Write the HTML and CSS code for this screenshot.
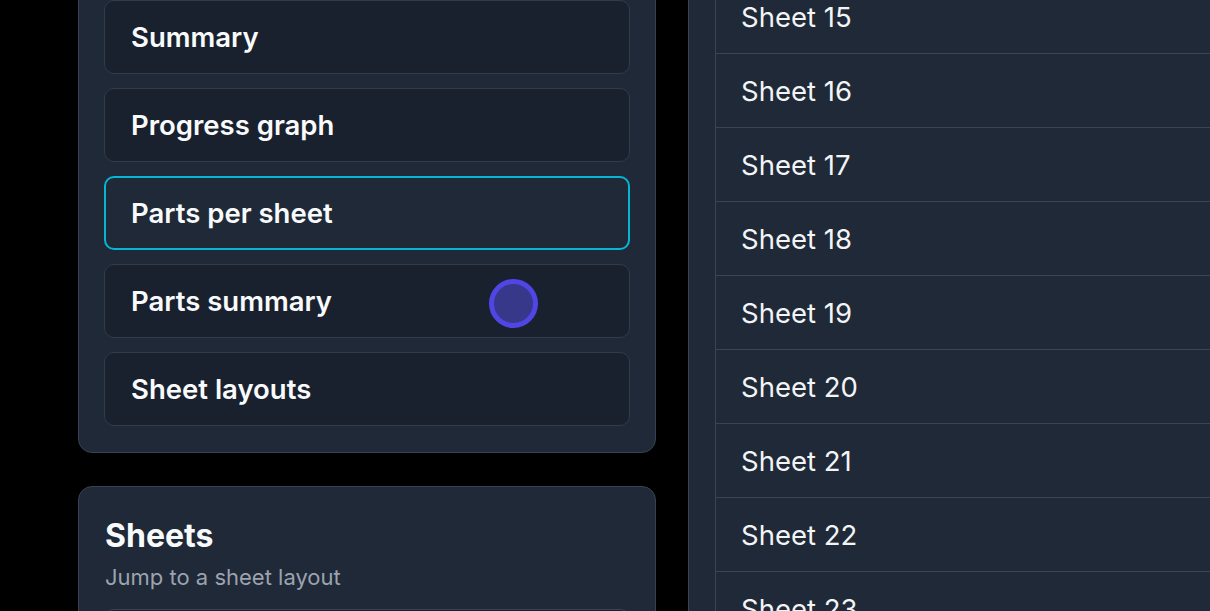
FILE: index.html
```html
<!DOCTYPE html>
<html lang="en">
<head>
<meta charset="utf-8">
<title>Reports</title>
<link rel="stylesheet" href="styles.css">
</head>
<body>
<div class="page">
  <div class="left">
    <section class="card nav-card">
      <div class="nav-item">Summary</div>
      <div class="nav-item">Progress graph</div>
      <div class="nav-item active">Parts per sheet</div>
      <div class="nav-item">Parts summary<span class="touch"></span></div>
      <div class="nav-item">Sheet layouts</div>
    </section>
    <section class="card sheets-card">
      <h2 class="sheets-title">Sheets</h2>
      <p class="sheets-sub">Jump to a sheet layout</p>
      <div class="sheets-box"></div>
    </section>
  </div>
  <div class="right">
    <ul class="sheet-list">
      <li class="sheet-row">Sheet 15</li>
      <li class="sheet-row">Sheet 16</li>
      <li class="sheet-row">Sheet 17</li>
      <li class="sheet-row">Sheet 18</li>
      <li class="sheet-row">Sheet 19</li>
      <li class="sheet-row">Sheet 20</li>
      <li class="sheet-row">Sheet 21</li>
      <li class="sheet-row">Sheet 22</li>
      <li class="sheet-row">Sheet 23</li>
    </ul>
  </div>
</div>
</body>
</html>
```

FILE: styles.css
```css
html, body {
  margin: 0;
  padding: 0;
  background: #000;
  height: 100%;
  overflow: hidden;
}
body {
  font-family: Inter, "Noto Sans", "Liberation Sans", sans-serif;
  color: #f9fafb;
}
.page {
  display: flex;
  align-items: flex-start;
  gap: 32px;
  padding-left: 78px;
}
.left {
  width: 578px;
  flex: none;
  display: flex;
  flex-direction: column;
  gap: 33px;
  margin-top: -27px;
}
.card {
  background: #1f2937;
  border: 1px solid #374151;
  border-radius: 14px;
  padding: 26px 25px;
  box-sizing: border-box;
}
.nav-card {
  display: flex;
  flex-direction: column;
  gap: 14px;
}
.nav-item {
  position: relative;
  height: 74px;
  box-sizing: border-box;
  border: 1px solid #323b4a;
  border-radius: 10px;
  background: #19212f;
  padding: 0 26px;
  display: flex;
  align-items: center;
  font-size: 27.5px;
  font-weight: 600;
  color: #f9fafb;
}
.nav-item.active {
  border: 2px solid #06b6d4;
  padding: 0 25px;
  background: #1f2937;
}
.touch {
  position: absolute;
  left: 384px;
  top: 14px;
  width: 49px;
  height: 49px;
  box-sizing: border-box;
  border-radius: 50%;
  border: 5px solid #4f46e5;
  background: #38388a;
}
.sheets-card {
  padding-bottom: 60px;
}
.sheets-title {
  margin: 3px 0 0 1px;
  font-size: 32px;
  line-height: 40px;
  font-weight: 700;
  color: #f9fafb;
}
.sheets-sub {
  margin: 7px 0 0 1px;
  font-size: 22px;
  line-height: 28px;
  font-weight: 400;
  color: #9ca3af;
}
.sheets-box {
  margin-top: 18px;
  height: 60px;
  border: 1px solid #3b4454;
  border-radius: 10px;
  background: #19212f;
}
.right {
  flex: none;
  width: 600px;
  margin-top: -20px;
  background: #1f2937;
  border-left: 1px solid #3b4454;
  padding-left: 26px;
}
.sheet-list {
  list-style: none;
  margin: 0;
  padding: 0;
  border-left: 1px solid #3b4454;
}
.sheet-row {
  height: 74px;
  box-sizing: border-box;
  border-bottom: 1px solid #3b4454;
  display: flex;
  align-items: center;
  padding: 0 0 0 25px;
  font-size: 27.5px;
  font-weight: 400;
  color: #f3f4f6;
}
```
